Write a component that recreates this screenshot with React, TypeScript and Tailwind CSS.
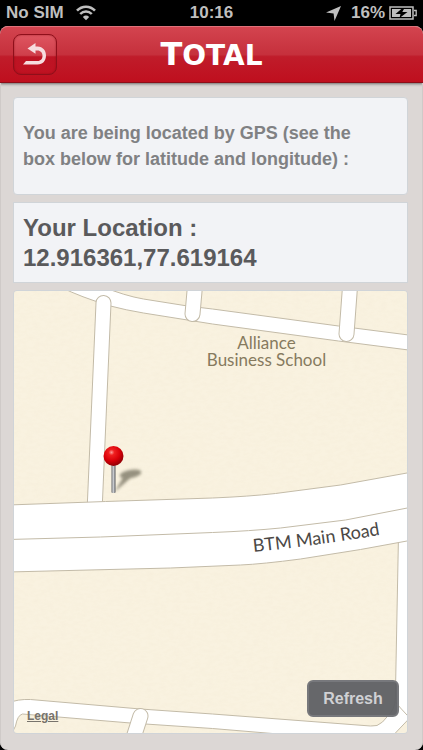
import React from "react";

function StatusBar() {
  return (
    <div className="grid h-[26px] grid-cols-3 items-center bg-black px-[6px] text-[17px] leading-[26px] font-bold text-[#bfbfbf]">
      <div className="flex items-center gap-3">
        <span>No SIM</span>
        <svg width="20" height="16" viewBox="0 0 20 16" fill="none" stroke="#bfbfbf" aria-label="Wi-Fi">
          <path d="M1 5.600C6 .4 14 .4 19 5.600" strokeWidth="2.600" />
          <path d="M4.200 9C7.500 5.600 12.500 5.600 15.800 9" strokeWidth="2.500" />
          <path d="M10 15.300 6.800 12Q10 9.200 13.200 12Z" fill="#bfbfbf" stroke="none" />
        </svg>
      </div>
      <span className="text-center">10:16</span>
      <div className="flex items-center justify-end">
        <svg className="mr-[10px]" width="15" height="15" viewBox="0 0 15 15" aria-label="Location in use">
          <path d="M15 0 8.500 15 7.600 7.400 0 6.500Z" fill="#bfbfbf" />
        </svg>
        <span className="mr-1">16%</span>
        <svg className="shrink-0" width="28" height="14" viewBox="0 0 28 14" aria-label="Battery charging">
          <rect x="1" y="1" width="23" height="12" fill="none" stroke="#bfbfbf" strokeWidth="1.500" />
          <path d="M25 4.500h2.200v5H25" fill="none" stroke="#bfbfbf" strokeWidth="1.300" />
          <rect x="3" y="3" width="19" height="8" fill="#bfbfbf" />
          <path d="M13.500 2 6.500 8H11.500L10.500 12 18.500 6H13.300L15.500 2Z" fill="#000" />
        </svg>
      </div>
    </div>
  );
}

function Header() {
  return (
    <header className="grid h-[57px] grid-cols-[1fr_auto_1fr] items-center rounded-t-lg border-t border-b border-t-[#e0727b] border-b-[#8d0d18] bg-[linear-gradient(#d3444f,#c6303c_50%,#c01c2a_54%,#bf0f1e)] px-[13px] shadow-[0_1px_3px_rgba(0,0,0,0.5)]">
      <button
        type="button"
        aria-label="Back"
        className="flex h-[41px] w-[44px] items-center justify-center rounded-lg border border-[#8f0f1a] bg-[linear-gradient(#df5560,#cf3f4b_52%,#bd1424_56%,#c01222)] shadow-[inset_0_0_2px_rgba(120,0,10,0.6)]"
      >
        <svg width="24" height="23" viewBox="0 0 24 23">
          <path
            d="M0 21.500 3 18H14.500C18 18 19.500 15.500 19.500 12.700 19.500 10 17.500 7.500 14.500 7.500H12.500V10.800L4.500 5.600 12.500 0V3.600H14.500C20 3.600 23 8 23 12.500 23 17.500 20 21.500 14.500 21.500Z"
            fill="#f6dcdf"
          />
        </svg>
      </button>
      <h1 className="flex items-baseline font-['DejaVu_Sans',sans-serif] text-[28px] leading-8 font-bold text-white">
        <span className="text-[32px]">T</span>
        <span>OTAL</span>
      </h1>
    </header>
  );
}

function LocationMap() {
  const edge = "#c3bba8";
  return (
    <svg
      className="absolute inset-0 h-full w-full"
      viewBox="13 291 394 442"
      preserveAspectRatio="xMidYMid slice"
      role="img"
      aria-label="Map of the current location"
    >
      <defs>
        <filter id="paper" x="0" y="0" width="1" height="1">
          <feTurbulence type="fractalNoise" baseFrequency="0.15 0.3" numOctaves="3" />
          <feColorMatrix values="0 0 0 0 .72  0 0 0 0 .62  0 0 0 0 .4  .5 0 0 0 -.17" />
        </filter>
        <filter id="soft" x="-30%" y="-30%" width="160%" height="160%">
          <feGaussianBlur stdDeviation="1.500" />
        </filter>
        <radialGradient id="head" cx=".4" cy=".32" r=".65">
          <stop offset="0" stopColor="#ff9c98" />
          <stop offset=".22" stopColor="#f02020" />
          <stop offset=".65" stopColor="#d80008" />
          <stop offset="1" stopColor="#990006" />
        </radialGradient>
        <linearGradient id="stem">
          <stop offset="0" stopColor="#65676b" />
          <stop offset=".45" stopColor="#d3d5d8" />
          <stop offset="1" stopColor="#55575b" />
        </linearGradient>
      </defs>
      <rect x="13" y="291" width="394" height="442" fill="#f9f2e0" />
      <rect x="13" y="291" width="394" height="442" filter="url(#paper)" opacity=".2" />

      <g fill="#fff" stroke={edge} strokeWidth="1">
        <path d="M60 287Q80 297 110 306Q125 310 143 313L212 324 338 341 412 350.500V335.500L338 326 212 309 187 306 143 299Q125 296 100 286Z" />
        <path d="M398 535 395 690Q396 706 390 713L382 722Q377 727 370 726L212 714 140 709 30 699.500Q17 699 8 703V740L15 726Q17 715 22 714L130 723 212 728.500 290 735H393L412 715V535Z" />
        <path d="M395 702 400 708 412 721" fill="none" />
      </g>

      <g fill="none" strokeLinecap="round">
        <path d="M103 303 94 512" stroke={edge} strokeWidth="16" />
        <path d="M103 303 94 512" stroke="#fff" strokeWidth="14" />
        <path d="M195 280 192 314" stroke={edge} strokeWidth="16" />
        <path d="M195 280 192 314" stroke="#fff" strokeWidth="14" />
        <path d="M350 280 346 334" stroke={edge} strokeWidth="16" />
        <path d="M350 280 346 334" stroke="#fff" strokeWidth="14" />
        <path d="M131 744 140 716" stroke={edge} strokeWidth="16" />
        <path d="M131 744 140 716" stroke="#fff" strokeWidth="14" />
      </g>

      <path
        d="M8 505 105 501.500 212 498Q248 496.500 275 493.500L340 485 412 472V540L360 549.500 300 559Q262 564 240 565L170 568 8 572Z"
        fill="#fff"
        stroke={edge}
      />
      <path d="M8 539.500 100 537 212 532.500Q250 531 280 528L345 520 412 507" fill="none" stroke={edge} />

      <text fill="#867a5e" fontSize="17" textAnchor="middle" className="font-[Lato,sans-serif]">
        <tspan x="266" y="349">Alliance</tspan>
        <tspan x="266" y="366">Business School</tspan>
      </text>
      <path id="main-road" d="M253 552Q322 545 384 534" fill="none" />
      <text fill="#4b4845" fontSize="18" className="font-[Lato,sans-serif]">
        <textPath href="#main-road">BTM Main Road</textPath>
      </text>

      <g filter="url(#soft)" fill="#55513f" opacity=".6">
        <ellipse cx="130" cy="474" rx="11" ry="4" transform="rotate(-10 130 474)" />
        <path d="M114 492 124 475 130 478Z" />
      </g>
      <rect x="111" y="463" width="4" height="30" rx="1" fill="url(#stem)" />
      <circle cx="113" cy="456" r="10" fill="url(#head)" />
    </svg>
  );
}

export default function App() {
  return (
    <div className="flex min-h-screen flex-col bg-black font-['Liberation_Sans',Arial,sans-serif]">
      <StatusBar />
      <div className="flex flex-1 flex-col rounded-lg bg-[#dcd7d5]">
        <Header />
        <main className="flex flex-1 flex-col gap-[7px] rounded-b-lg border-x border-[#cfcac8] pt-[14px] pr-[14px] pb-4 pl-3">
          <section className="rounded-sm border border-[#d0d4d8] bg-[#f2f3f6] px-[9px] py-[22px]">
            <p className="text-[18px] leading-[26px] font-bold text-[#808183]">
              You are being located by GPS (see the
              <br />
              box below for latitude and longitude) :
            </p>
          </section>
          <section className="border border-[#d0d4d8] bg-[#f2f3f6] px-[9px] pt-[10px] pb-[9px]">
            <p className="text-[24px] leading-[30px] font-bold text-[#5a5a5c]">
              Your Location :<br />
              12.916361,77.619164
            </p>
          </section>
          <section className="relative flex flex-1 items-end justify-between overflow-hidden rounded-sm border border-[#d0d4d8] pr-2 pb-4 pl-[13px]">
            <LocationMap />
            <a href="#legal" className="relative -mb-[7px] text-[12px] leading-4 font-bold text-[#77736c] underline">
              Legal
            </a>
            <button
              type="button"
              className="relative h-[37px] w-[92px] rounded-md border-2 border-[#77787c] bg-[#5e5f63]/95 text-[16px] font-bold text-[#d0d1d4]"
            >
              Refresh
            </button>
          </section>
        </main>
      </div>
    </div>
  );
}
